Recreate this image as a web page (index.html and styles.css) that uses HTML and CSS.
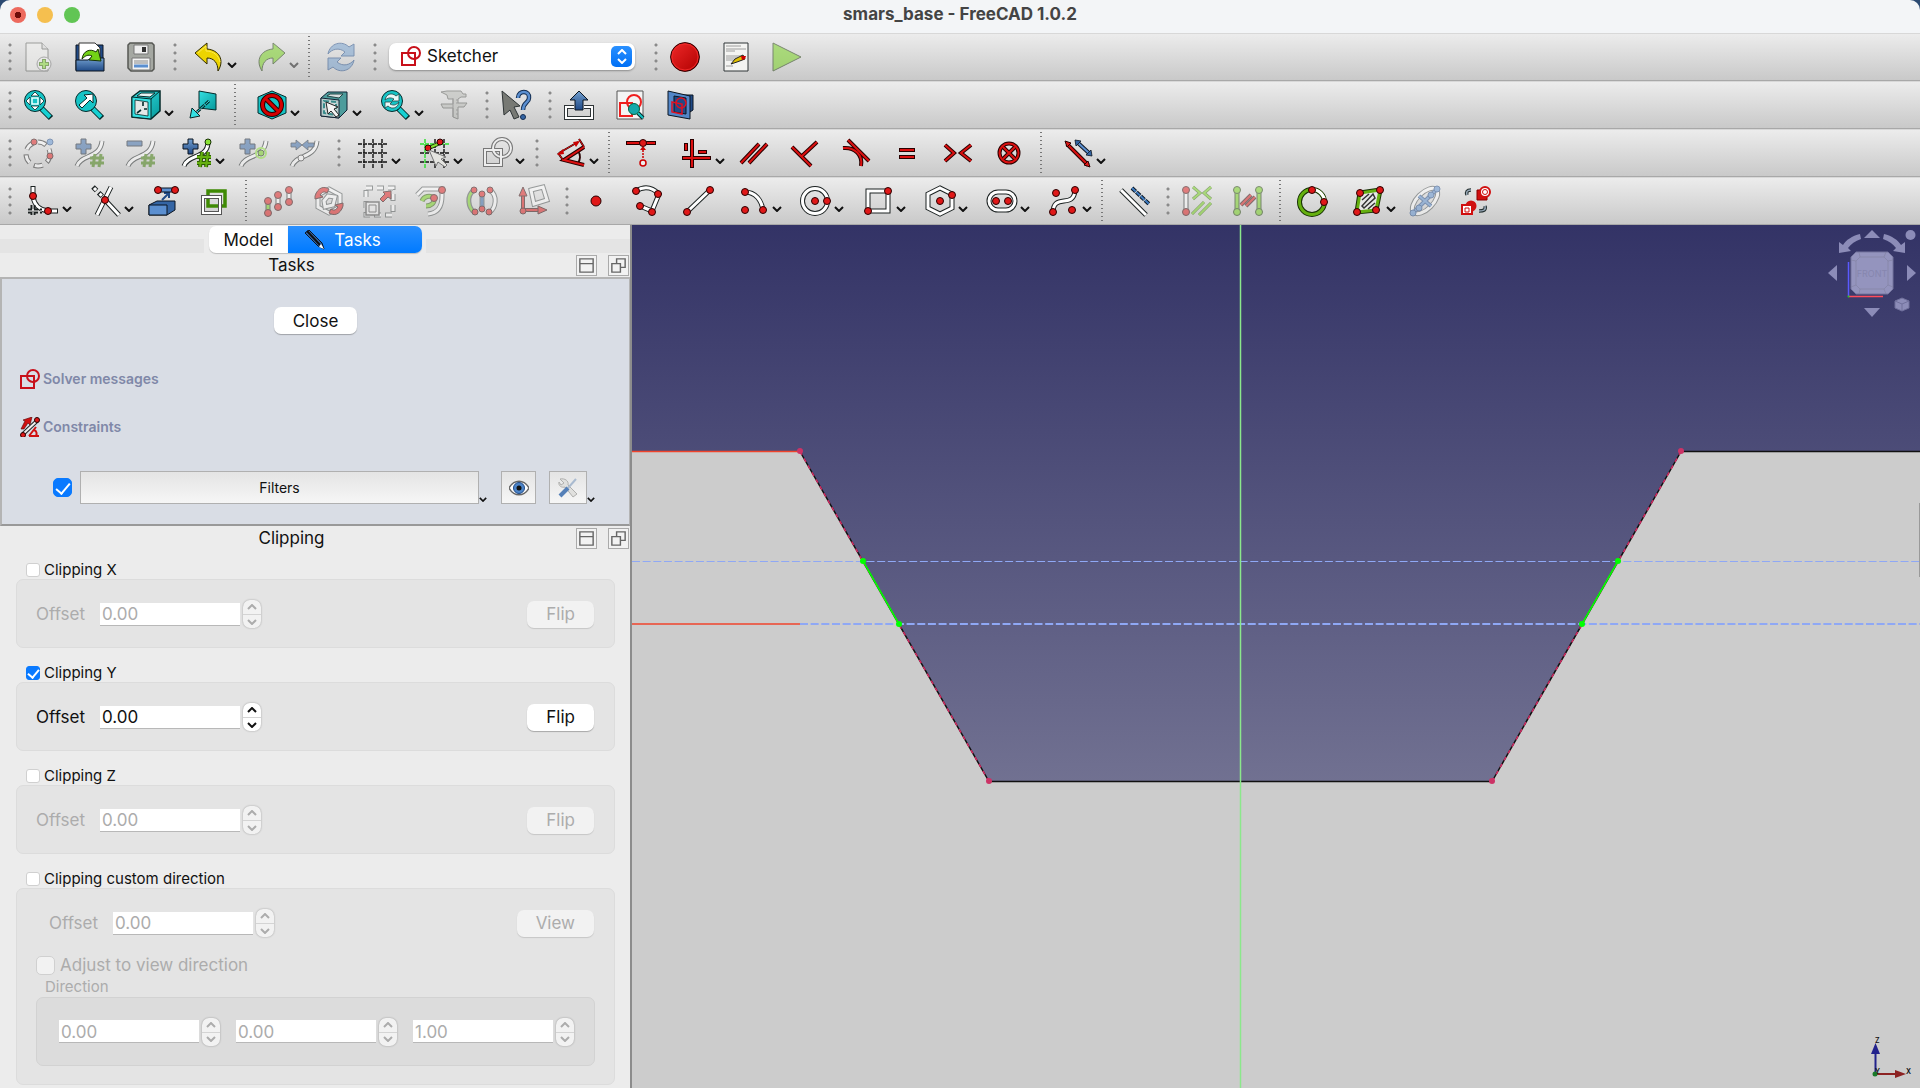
FILE: index.html
```html
<!DOCTYPE html>
<html lang="en">
<head>
<meta charset="utf-8">
<title>smars_base - FreeCAD 1.0.2</title>
<link rel="stylesheet" href="styles.css">
</head>
<body>
<svg class="defs" width="0" height="0" aria-hidden="true">
  <defs>
    <linearGradient id="gBlue" x1="0" y1="0" x2="0" y2="1"><stop offset="0" stop-color="#729fcf"/><stop offset="1" stop-color="#204a87"/></linearGradient>
    <linearGradient id="gRed" x1="0" y1="0" x2="1" y2="1"><stop offset="0" stop-color="#ef2929"/><stop offset="1" stop-color="#b00000"/></linearGradient>
    <linearGradient id="gTeal" x1="0" y1="0" x2="1" y2="1"><stop offset="0" stop-color="#34e0e2"/><stop offset="1" stop-color="#06989a"/></linearGradient>
    <linearGradient id="gSky" x1="0" y1="0" x2="0" y2="1"><stop offset="0" stop-color="#333366"/><stop offset="1" stop-color="#9393a9"/></linearGradient>
  </defs>
  <symbol id="chev" viewBox="0 0 10 6"><path d="M1 1L5 5L9 1" fill="none" stroke="#111" stroke-width="2"/></symbol>
  <symbol id="sketch" viewBox="0 0 20 20"><g fill="none" stroke="#c8101a" stroke-width="2"><path d="M1 7H14V19H1Z"/><circle cx="13" cy="7" r="6"/></g></symbol>
  <symbol id="up" viewBox="0 0 10 6"><path d="M1 5L5 1L9 5" fill="none" stroke="currentColor" stroke-width="2"/></symbol>
  <symbol id="down" viewBox="0 0 10 6"><path d="M1 1L5 5L9 1" fill="none" stroke="currentColor" stroke-width="2"/></symbol>
</svg>

<header class="titlebar">
  <div class="lights"><button class="light light-close" aria-label="Close window"></button><button class="light light-min" aria-label="Minimize"></button><button class="light light-max" aria-label="Zoom"></button></div>
  <h1>smars_base - FreeCAD 1.0.2</h1>
</header>

<nav class="toolbars">
<div class="toolbar">
  <span class="handle"></span>
  <button class="tool off" aria-label="New"><svg class="icon" viewBox="0 0 30 30"><path d="M2 1H18L24 7V29H2Z" fill="#f2f2f0" stroke="#555753"/><path d="M18 1V7H24" fill="#ddd" stroke="#555753"/><circle cx="20" cy="22" r="7" fill="#f4f4f4" stroke="#777"/><path d="M20 17V27M15 22H25" stroke="#3c7a04" stroke-width="4"/><path d="M20 18V26M16 22H24" stroke="#8ae234" stroke-width="2"/></svg></button>
  <button class="tool" aria-label="Open"><svg class="icon" viewBox="0 0 30 30"><path d="M1 3H28V28H1Z" fill="#204a87" stroke="#0b1521"/><path d="M4 1H20L25 6V20H4Z" fill="#fff" stroke="#333"/><path d="M1 29V18H13L16 16H29V29Z" fill="url(#gBlue)" stroke="#0b1521"/><path d="M7 17C8 9 15 6 21 10L23 7L26 19L14 18L17 14C13 12 10 14 7 17Z" fill="#73d216" stroke="#173104"/></svg></button>
  <button class="tool" aria-label="Save"><svg class="icon" viewBox="0 0 30 30"><path d="M2 3L4 1H26L28 3V27L26 29H5L2 26Z" fill="#a5a8a2" stroke="#555753" stroke-width="1.5"/><path d="M8 3H22V12H8Z" fill="#eee" stroke="#777"/><path d="M16 5H20V10H16Z" fill="#333"/><path d="M6 16H24V28H6Z" fill="#f4f4f4" stroke="#777"/><path d="M8 19H22M8 21H22" stroke="#888"/><path d="M8 24H22" stroke="#5b8fd0" stroke-width="3"/></svg></button>
  <span class="handle"></span>
  <button class="tool drop" aria-label="Undo"><svg class="icon" viewBox="0 0 30 30"><path d="M1 11L13 1V7C25 8 31 18 24 29C24 21 20 16 13 16V22Z" fill="#edd400" stroke="#302b00" stroke-linejoin="round"/><path d="M4 11L12 4V9C20 9 25 14 26 20" fill="none" stroke="#fce94f"/></svg><svg class="chev"><use href="#chev"/></svg></button>
  <button class="tool drop off" aria-label="Redo"><svg class="icon" viewBox="0 0 30 30"><path d="M29 11L17 1V7C5 8 -1 18 6 29C6 21 10 16 17 16V22Z" fill="#73d216" stroke="#173104" stroke-linejoin="round"/></svg><svg class="chev"><use href="#chev"/></svg></button>
  <span class="sep"></span>
  <button class="tool off" aria-label="Refresh"><svg class="icon" viewBox="0 0 30 30"><g fill="#729fcf" stroke="#204a87" stroke-linejoin="round"><path d="M2 12C4 1 16 -2 23 5L28 2V14H15L19 10C13 5 6 7 2 12Z"/><path d="M28 18C26 29 14 32 7 25L2 28V16H15L11 20C17 25 24 23 28 18Z"/></g></svg></button>
  <span class="handle"></span>
  <div class="workbench">
    <svg class="mini"><use href="#sketch"/></svg>
    <select aria-label="Workbench"><option>Sketcher</option></select>
    <span class="stepper"><svg><use href="#up"/></svg><svg><use href="#down"/></svg></span>
  </div>
  <span class="handle"></span>
  <button class="tool" aria-label="Record macro"><svg class="icon" viewBox="0 0 30 30"><circle cx="15" cy="15" r="14.4" fill="url(#gRed)" stroke="#280000"/><circle cx="15" cy="15" r="13" fill="none" stroke="#ef2929"/></svg></button>
  <button class="tool" aria-label="Macros"><svg class="icon" viewBox="0 0 30 30"><path d="M3 1H27V29H3Z" fill="#f4f4f2" stroke="#2e3436"/><path d="M5 4H20M5 7H25M5 9H14M5 14H23M5 16H20M5 18H14M5 24H12" stroke="#888" stroke-width=".8"/><path d="M10 22L14 17L22 13L24 17L16 20Z" fill="#e0c000" stroke="#222"/><path d="M20 14L25 14L24 17L21 18Z" fill="#cc0000"/></svg></button>
  <button class="tool off" aria-label="Run macro"><svg class="icon" viewBox="0 0 30 30"><path d="M1 1L29 15L1 29Z" fill="#73d216" stroke="#173104"/></svg></button>
</div>

<div class="toolbar">
  <span class="handle"></span>
  <button class="tool" aria-label="Fit all"><svg class="icon" viewBox="0 0 30 30"><path d="M17 18L27 28" stroke="#042a2a" stroke-width="6"/><path d="M18 19L26 27" stroke="#16d0d2" stroke-width="4"/><circle cx="11" cy="11" r="10.5" fill="#16c4c6" stroke="#042a2a"/><path d="M11 2L15 6H7ZM11 20L15 16H7ZM2 11L6 7V15ZM20 11L16 7V15Z" fill="#fff" stroke="#042a2a" stroke-width=".8"/><path d="M8 8H14V14H8Z" fill="none" stroke="#e8ffff" stroke-width="1.5"/></svg></button>
  <button class="tool" aria-label="Fit selection"><svg class="icon" viewBox="0 0 30 30"><path d="M17 18L27 28" stroke="#042a2a" stroke-width="6"/><path d="M18 19L26 27" stroke="#16d0d2" stroke-width="4"/><circle cx="11" cy="11" r="10.5" fill="#16c4c6" stroke="#042a2a"/><path d="M18 4V13L15 10L7 18L4 15L12 8L9 5Z" fill="#fff" stroke="#042a2a"/></svg></button>
  <button class="tool drop" aria-label="Standard views"><svg class="icon" viewBox="0 0 30 30"><path d="M1 7L9 1H29V21L20 29L1 27Z" fill="url(#gTeal)" stroke="#042a2a" stroke-width="1.5"/><path d="M1 7L20 9V29L1 27Z" fill="#34e0e2" stroke="#042a2a"/><path d="M4 10L17 12V26L4 24Z" fill="#e4e8e8" stroke="#042a2a" stroke-width=".8"/><path d="M20 9L29 1M6 6L10 3H24L19 7Z" fill="#e4f4f4" stroke="#042a2a"/><path d="M12 12V16M13 19H16M6 23L10 20" stroke="#042a2a" stroke-width="1.6"/></svg><svg class="chev"><use href="#chev"/></svg></button>
  <button class="tool" aria-label="Align to selection"><svg class="icon" viewBox="0 0 30 30"><path d="M11 1L28 4V20L11 18Z" fill="url(#gTeal)" stroke="#042a2a"/><path d="M21 11L9 22" stroke="#042a2a" stroke-width="3" stroke-dasharray="5 1"/><path d="M21 11L9 22" stroke="#34e0e2" stroke-dasharray="5 1"/><path d="M2 28L4 18L12 26Z" fill="#34e0e2" stroke="#042a2a"/></svg></button>
  <span class="sep"></span>
  <button class="tool drop" aria-label="Draw style"><svg class="icon" viewBox="0 0 30 30"><path d="M15 1L29 7V23L15 29L1 23V7Z" fill="#16c4c6" stroke="#042a2a"/><circle cx="15" cy="15" r="9.5" fill="none" stroke="#280000" stroke-width="5"/><path d="M8 8L22 22" stroke="#280000" stroke-width="5"/><circle cx="15" cy="15" r="9.5" fill="none" stroke="#d40000" stroke-width="3"/><path d="M8 8L22 22" stroke="#d40000" stroke-width="3"/></svg><svg class="chev"><use href="#chev"/></svg></button>
  <button class="tool drop" aria-label="Selection"><svg class="icon" viewBox="0 0 30 30"><path d="M2 8L9 2H28V20L20 28L2 26Z" fill="#4d9c9c" stroke="#123"/><path d="M2 8L20 10V28L2 26Z" fill="#b8cccc" stroke="#123"/><path d="M5 11L17 12V25L5 23Z" fill="#d0d8d8" stroke="#3a8c8c" stroke-width="2" stroke-dasharray="5 2"/><path d="M8 6L11 4H24L20 8Z" fill="#d8e0e0" stroke="#244"/><path d="M7 12L19 17L15 19L20 25L17 27L12 21L9 24Z" fill="#f4f4f4" stroke="#222"/></svg><svg class="chev"><use href="#chev"/></svg></button>
  <button class="tool drop" aria-label="Sync view"><svg class="icon" viewBox="0 0 30 30"><path d="M17 18L27 28" stroke="#042a2a" stroke-width="6"/><path d="M18 19L26 27" stroke="#16d0d2" stroke-width="4"/><circle cx="11" cy="11" r="10.5" fill="#16c4c6" stroke="#042a2a"/><path d="M4 10C5 4 11 2 15 6L18 4V11H11L13 9C9 7 7 8 4 10ZM18 12C17 18 11 20 7 16L4 18V12H11L9 14C13 16 15 15 18 12Z" fill="#e8f8f8" stroke="#244" stroke-width=".8"/></svg><svg class="chev"><use href="#chev"/></svg></button>
  <button class="tool off" aria-label="Measure"><svg class="icon" viewBox="0 0 30 30"><path d="M3 2L9 1H23L25 4H28V7H23L20 9V13H29L26 17H20V29L15 27V18H5L3 14H15V9H10L9 5Z" fill="#b8bab5" stroke="#555753"/><path d="M15 8V27M18 10H20M18 13H20M18 20H20M18 24H20" stroke="#666"/></svg></button>
  <span class="handle"></span>
  <button class="tool" aria-label="What's this"><svg class="icon" viewBox="0 0 30 30"><path d="M1 1L19 16L13 17L18 27L13 29L9 20L3 25Z" fill="#777974" stroke="#2e3436"/><path d="M17 8C17 0 29 0 28 8C28 13 22 12 22 20" fill="none" stroke="#122c50" stroke-width="4.5"/><path d="M17 8C17 0 29 0 28 8C28 13 22 12 22 20" fill="none" stroke="#5b8fd0" stroke-width="2.5"/><circle cx="22" cy="27" r="2.5" fill="#3465a4" stroke="#122c50"/></svg></button>
  <span class="handle"></span>
  <button class="tool" aria-label="Leave sketch"><svg class="icon" viewBox="0 0 30 30"><path d="M10 17H2V28H28V17H20" fill="none" stroke="#2e3436" stroke-width="4"/><path d="M10 17H2V28H28V17H20" fill="none" stroke="#fff" stroke-width="2"/><path d="M15 1L24 10H19V20H11V10H6Z" fill="url(#gBlue)" stroke="#0b1521"/></svg></button>
  <button class="tool" aria-label="View sketch"><svg class="icon" viewBox="0 0 30 30"><path d="M2 1H28V29H2Z" fill="#f4f4f4" stroke="#555"/><g fill="none" stroke="#ef1f1f" stroke-width="2"><path d="M5 13H17V26H5Z"/><circle cx="19" cy="12" r="7"/></g><path d="M23 23L28 28" stroke="#042a2a" stroke-width="4"/><path d="M23 23L28 28" stroke="#16c4c6" stroke-width="2"/><circle cx="19" cy="19" r="5.5" fill="#16a8aa" stroke="#064"/></svg></button>
  <button class="tool" aria-label="View section"><svg class="icon" viewBox="0 0 30 30"><path d="M8 5H27V20L24 22H8Z" fill="#204a87" stroke="#0b1521"/><path d="M2 1L24 6V29L2 25Z" fill="#5286c8" stroke="#0b1521"/><path d="M8 6L20 8V24L8 22Z" fill="#204a87" stroke="#0b1521"/><g fill="none" stroke="#e01020" stroke-width="1.5"><path d="M6 12L16 14V24L6 22Z"/><circle cx="15" cy="13" r="5"/></g></svg></button>
</div>

<div class="toolbar">
  <span class="handle"></span>
  <button class="tool off" aria-label="Show geometry"><svg class="icon" viewBox="0 0 30 30"><circle cx="14" cy="16" r="12" fill="none" stroke="#222" stroke-width="5" stroke-dasharray="9 5"/><circle cx="14" cy="16" r="12" fill="none" stroke="#fff" stroke-width="3" stroke-dasharray="8 6"/><circle cx="10" cy="4" r="3" class="dot"/><circle cx="26" cy="18" r="3" class="dot"/><circle cx="26" cy="4" r="3" fill="#5b8fd0" stroke="#204a87"/></svg></button>
  <button class="tool off" aria-label="Increase degree"><svg class="icon" viewBox="0 0 30 30"><path d="M2 28C6 16 25 21 27 3" class="k"/><path d="M2 28C6 16 25 21 27 3" class="w"/><path d="M6 1H11V6H16V11H11V16H6V11H1V6H6Z" fill="#3465a4" stroke="#0b1521"/><path d="M20 16L18 29M26 16L24 29M15 20H29M15 25H29" stroke="#3c7a04" stroke-width="3"/></svg></button>
  <button class="tool off" aria-label="Decrease degree"><svg class="icon" viewBox="0 0 30 30"><path d="M2 28C6 16 25 21 27 3" class="k"/><path d="M2 28C6 16 25 21 27 3" class="w"/><path d="M1 3H16V8H1Z" fill="#3465a4" stroke="#0b1521"/><path d="M20 16L18 29M26 16L24 29M15 20H29M15 25H29" stroke="#3c7a04" stroke-width="3"/></svg></button>
  <button class="tool drop" aria-label="Knot multiplicity"><svg class="icon" viewBox="0 0 30 30"><path d="M2 28C6 16 25 21 26 5" class="k"/><path d="M2 28C6 16 25 21 26 5" class="w"/><path d="M6 1H11V6H16V11H11V16H6V11H1V6H6Z" fill="url(#gBlue)" stroke="#0b1521"/><path d="M20 14L18 29M26 14L24 29M15 19H29M15 25H29" stroke="#2d5d04" stroke-width="4"/><path d="M20 14L18 29M26 14L24 29M15 19H29M15 25H29" stroke="#65b010" stroke-width="2"/><circle cx="26" cy="4" r="3" fill="#8ae234" stroke="#173104"/></svg><svg class="chev"><use href="#chev"/></svg></button>
  <button class="tool off" aria-label="Insert knot"><svg class="icon" viewBox="0 0 30 30"><path d="M2 28C6 16 25 21 27 3" class="k"/><path d="M2 28C6 16 25 21 27 3" class="w"/><path d="M6 1H11V6H16V11H11V16H6V11H1V6H6Z" fill="#3465a4" stroke="#0b1521"/><circle cx="22" cy="15" r="5" fill="none" stroke="#8ae234" stroke-width="2"/><circle cx="22" cy="15" r="3" fill="#73d216" stroke="#173104"/></svg></button>
  <button class="tool off" aria-label="Join curves"><svg class="icon" viewBox="0 0 30 30"><path d="M2 28C6 16 25 21 27 3" class="k"/><path d="M2 28C6 16 25 21 27 3" class="w"/><path d="M1 5H6V2L12 7L6 12V9H1ZM24 5H18V2L12 7L18 12V9H24Z" fill="#3465a4" stroke="#0b1521" stroke-width=".8"/><circle cx="11" cy="20" r="3" fill="#fff" stroke="#333"/></svg></button>
  <span class="handle"></span>
  <button class="tool drop" aria-label="Toggle grid"><svg class="icon" viewBox="0 0 30 30"><path d="M6 1V30M15 1V30M24 1V30M0 6H30M0 15H30M0 24H30" stroke="#111" stroke-width="1.4" stroke-dasharray="4 1"/></svg><svg class="chev"><use href="#chev"/></svg></button>
  <button class="tool drop" aria-label="Toggle snap"><svg class="icon" viewBox="0 0 30 30"><path d="M15 1V30M24 1V30M0 15H30M0 24H30" stroke="#111" stroke-width="1.4" stroke-dasharray="4 1"/><path d="M5 1V30M0 6H30" stroke="#2be02b" stroke-width="1.4" stroke-dasharray="4 1"/><path d="M9 10L20 5" stroke="#173104" stroke-width="4"/><path d="M9 10L20 5" stroke="#8ae234" stroke-width="2"/><circle cx="8" cy="10" r="3" class="dot"/><circle cx="20" cy="4" r="3" class="dot"/><path d="M9 12L26 19L21 21L27 27L25 29L18 24L16 28Z" fill="#e4e4e0" stroke="#777"/></svg><svg class="chev"><use href="#chev"/></svg></button>
  <button class="tool drop" aria-label="Rendering order"><svg class="icon" viewBox="0 0 30 30"><g fill="none" stroke="#777" stroke-width="4"><path d="M3 12H19V27H3Z"/><circle cx="20" cy="10" r="9"/></g><g fill="none" stroke="#eee" stroke-width="2"><path d="M3 12H19V27H3Z"/><circle cx="20" cy="10" r="9"/></g></svg><svg class="chev"><use href="#chev"/></svg></button>
  <span class="handle"></span>
  <button class="tool drop" aria-label="Dimension"><svg class="icon" viewBox="0 0 30 30"><path d="M28 27L8 22L28 9M2 15L7 22M23 1L28 9M3 15L22 4M22 13C25 17 24 22 22 25" class="rk thin"/><path d="M28 27L8 22L28 9" class="rk"/><path d="M28 27L8 22L28 9" class="r"/><path d="M2 15L7 22M23 1L28 9M3 15L22 4" class="r thin2"/><path d="M1 17L7 11L8 16ZM24 3L17 4L20 9Z" fill="#cc0000"/></svg><svg class="chev"><use href="#chev"/></svg></button>
  <span class="sep"></span>
  <button class="tool" aria-label="Coincident"><svg class="icon" viewBox="0 0 30 30"><path d="M0 5H30" class="rk"/><path d="M1 5H29" class="r"/><circle cx="17" cy="5" r="3.5" class="dot"/><path d="M17 8L20 12H14Z" fill="#c00"/><path d="M17 12V21" stroke="#c00" stroke-width="1.5" stroke-dasharray="2 1"/><circle cx="17" cy="25" r="3" fill="#eee" stroke="#c00" stroke-width="1.5"/></svg></button>
  <button class="tool drop" aria-label="Horizontal or vertical"><svg class="icon" viewBox="0 0 30 30"><path d="M10 1V30M0 20H29M4 5V13M16 14H25" class="rk"/><path d="M10 2V29M1 20H28M4 6V12M17 14H24" class="r"/></svg><svg class="chev"><use href="#chev"/></svg></button>
  <button class="tool" aria-label="Parallel"><svg class="icon" viewBox="0 0 30 30"><path d="M2 25L20 6M10 25L28 6" class="rk"/><path d="M2 25L20 6M10 25L28 6" class="r"/></svg></button>
  <button class="tool" aria-label="Perpendicular"><svg class="icon" viewBox="0 0 30 30"><path d="M2 9L21 28M12 18L27 4" class="rk"/><path d="M2 9L21 28M12 18L27 4" class="r"/></svg></button>
  <button class="tool" aria-label="Tangent"><svg class="icon" viewBox="0 0 30 30"><path d="M7 2L28 23M2 10C14 9 22 17 20 28" class="rk"/><path d="M7 2L28 23M2 10C14 9 22 17 20 28" class="r"/></svg></button>
  <button class="tool" aria-label="Equal"><svg class="icon" viewBox="0 0 30 30"><path d="M7 12H23M7 19H23" class="rk"/><path d="M8 12H22M8 19H22" class="r"/></svg></button>
  <button class="tool" aria-label="Symmetric"><svg class="icon" viewBox="0 0 30 30"><path d="M2 7L11 15L2 23M28 7L18 15L28 23" class="rk"/><path d="M2 7L11 15L2 23M28 7L18 15L28 23" class="r"/></svg></button>
  <button class="tool" aria-label="Block"><svg class="icon" viewBox="0 0 30 30"><circle cx="15" cy="15" r="9.5" class="rk"/><path d="M9 9L21 21M21 9L9 21" class="rk"/><circle cx="15" cy="15" r="9.5" class="r"/><path d="M9 9L21 21M21 9L9 21" class="r"/></svg></button>
  <span class="sep"></span>
  <button class="tool drop" aria-label="Toggle driving"><svg class="icon" viewBox="0 0 30 30"><path d="M4 6L25 27" class="rk"/><path d="M4 6L25 27" class="r"/><path d="M2 3L8 5L4 9ZM27 29L21 27L25 23Z" class="dot"/><path d="M14 4L27 16" stroke="#0b1521" stroke-width="4"/><path d="M14 4L27 16" stroke="#5b8fd0" stroke-width="2"/><path d="M12 2L18 3L13 8ZM29 18L23 17L28 12Z" fill="#3465a4" stroke="#0b1521" stroke-width=".8"/></svg><svg class="chev"><use href="#chev"/></svg></button>
</div>

<div class="toolbar">
  <span class="handle"></span>
  <button class="tool drop" aria-label="Fillet"><svg class="icon" viewBox="0 0 30 30"><path d="M4 0V10C5 19 11 24 19 25H29" class="k"/><path d="M4 1V10C5 19 11 24 19 25H28" class="w"/><path d="M4 19V30M-1 25H13" class="k" stroke-dasharray="4 2"/><path d="M4 19V30M-1 25H13" class="w thin2" stroke-dasharray="4 2"/><circle cx="4" cy="10" r="3.5" class="dot"/><circle cx="19" cy="25" r="3.5" class="dot"/></svg><svg class="chev"><use href="#chev"/></svg></button>
  <button class="tool drop" aria-label="Trim"><svg class="icon" viewBox="0 0 30 30"><path d="M20 1L6 29M15 15L28 29" class="k"/><path d="M2 1L13 12" class="k" stroke-dasharray="5 3"/><path d="M20 1L6 29M15 15L28 29" class="w"/><path d="M3 2L13 12" class="w" stroke-dasharray="3 5"/><circle cx="14" cy="14" r="3.5" class="dot"/></svg><svg class="chev"><use href="#chev"/></svg></button>
  <button class="tool" aria-label="External geometry"><svg class="icon" viewBox="0 0 30 30"><path d="M1 19L9 15H27V24L19 29H1Z" fill="#3465a4" stroke="#0b1521"/><path d="M1 19H19V29H1Z" fill="#5b8fd0" stroke="#0b1521"/><path d="M14 14L20 8M16 7H21V12" fill="none" stroke="#204a87" stroke-width="2"/><path d="M10 4H27" stroke="#0b1521" stroke-width="5"/><path d="M10 4H27" stroke="#5b8fd0" stroke-width="3"/><circle cx="10" cy="4" r="3.5" class="dot"/><circle cx="27" cy="4" r="3.5" class="dot"/></svg></button>
  <button class="tool" aria-label="Carbon copy"><svg class="icon" viewBox="0 0 30 30"><path d="M9 5H26V20H9Z" fill="none" stroke="#3f8a04" stroke-width="3.5"/><path d="M4 11H21V27H4Z" fill="none" stroke="#555" stroke-width="4"/><path d="M4 11H21V27H4Z" fill="none" stroke="#fff" stroke-width="2"/></svg></button>
  <span class="sep"></span>
  <button class="tool off" aria-label="Array"><svg class="icon" viewBox="0 0 30 30"><path d="M5 15V27M15 9V21M26 4V16" class="k"/><path d="M15 9V21M26 4V16" class="w"/><path d="M5 15V27" stroke="#73d216" stroke-width="3"/><circle cx="5" cy="15" r="3.5" class="dot"/><circle cx="5" cy="27" r="3.5" class="dot"/><circle cx="15" cy="9" r="3.5" class="dot"/><circle cx="15" cy="21" r="3.5" class="dot"/><circle cx="26" cy="4" r="3.5" class="dot"/><circle cx="26" cy="16" r="3.5" class="dot"/></svg></button>
  <button class="tool off" aria-label="Rotate"><svg class="icon" viewBox="0 0 30 30"><path d="M15 3L26 9V21L15 27L4 21V9Z" class="k soft"/><path d="M15 3L26 9V21L15 27L4 21V9Z" class="w"/><path d="M14 10L21 11L19 19L11 21L10 15Z" class="k soft"/><path d="M14 10L21 11L19 19L11 21L10 15Z" class="w"/><path d="M1 10C4 1 10 0 15 3L13 7C10 5 8 6 6 9L9 11L1 13ZM29 20C26 29 20 30 15 27L17 23C20 25 22 24 24 21L21 19L29 17Z" class="dot"/></svg></button>
  <button class="tool off" aria-label="Scale"><svg class="icon" viewBox="0 0 30 30"><path d="M1 2H28V29H1Z" class="k soft" stroke-dasharray="7 4"/><path d="M1 2H28V29H1Z" class="w" stroke-dasharray="6 5"/><path d="M1 16H14V29H1Z" fill="#eee" stroke="#444" stroke-width="1.5"/><path d="M4 19H11V26H4Z" fill="none" stroke="#444"/><path d="M26 5V13L23 11L18 16L15 13L20 8L18 6Z" class="dot"/></svg></button>
  <button class="tool off" aria-label="Offset"><svg class="icon" viewBox="0 0 30 30"><path d="M1 9L7 3H26V10C26 21 22 27 12 28" class="k soft"/><path d="M1 9L7 3H26V10C26 21 22 27 12 28" class="w"/><path d="M6 15C8 10 14 9 18 12C19 17 15 20 10 20" fill="none" stroke="#2d5d04" stroke-width="5"/><path d="M6 15C8 10 14 9 18 12C19 17 15 20 10 20" fill="none" stroke="#73d216" stroke-width="3"/><circle cx="26" cy="4" r="3.5" class="dot"/><circle cx="18" cy="12" r="3.5" class="dot"/></svg></button>
  <button class="tool off" aria-label="Symmetry"><svg class="icon" viewBox="0 0 30 30"><path d="M7 4C-1 10 1 22 8 27M23 4C31 10 29 22 22 27M15 8V22" class="k soft"/><path d="M23 4C31 10 29 22 22 27" class="w"/><path d="M7 4C-1 10 1 22 8 27" fill="none" stroke="#73d216" stroke-width="2.5"/><path d="M15 8V22" stroke="#3465a4" stroke-width="3"/><circle cx="7" cy="4" r="3" class="dot"/><circle cx="23" cy="4" r="3" class="dot"/><circle cx="8" cy="26" r="3" class="dot"/><circle cx="22" cy="26" r="3" class="dot"/><circle cx="15" cy="8" r="3" class="dot"/><circle cx="15" cy="23" r="3" class="dot"/></svg></button>
  <button class="tool off" aria-label="Remove axes alignment"><svg class="icon" viewBox="0 0 30 30"><path d="M13 4L25 1L29 14L16 18Z" class="k soft"/><path d="M13 4L25 1L29 14L16 18Z" class="w"/><path d="M5 24V8M5 24H23" class="rk"/><path d="M5 24V8M5 24H23" class="r"/><path d="M5 1L9 10H1ZM29 24L20 28V20Z" class="dot"/><circle cx="5" cy="25" r="3" class="dot"/></svg></button>
  <span class="handle"></span>
  <button class="tool" aria-label="Point"><svg class="icon" viewBox="0 0 30 30"><circle cx="15" cy="15" r="5" class="dot"/></svg></button>
  <button class="tool" aria-label="Polyline"><svg class="icon" viewBox="0 0 30 30"><path d="M4 5C12 0 20 1 27 8L20 25L8 20" class="k"/><path d="M4 5C12 0 20 1 27 8L20 25L8 20" class="w"/><circle cx="4" cy="5" r="3.5" class="dot"/><circle cx="26" cy="8" r="3.5" class="dot"/><circle cx="20" cy="26" r="3.5" class="dot"/><circle cx="8" cy="20" r="3.5" class="dot"/></svg></button>
  <button class="tool" aria-label="Line"><svg class="icon" viewBox="0 0 30 30"><path d="M4 26L27 4" class="k"/><path d="M4 26L27 4" class="w"/><circle cx="4" cy="26" r="3.5" class="dot"/><circle cx="27" cy="4" r="3.5" class="dot"/></svg></button>
  <button class="tool drop" aria-label="Arc"><svg class="icon" viewBox="0 0 30 30"><path d="M6 6C16 6 23 14 24 25" class="k"/><path d="M6 6C16 6 23 14 24 25" class="w"/><circle cx="6" cy="6" r="3.5" class="dot"/><circle cx="24" cy="24" r="3.5" class="dot"/><circle cx="6" cy="24" r="3.5" class="dot"/></svg><svg class="chev"><use href="#chev"/></svg></button>
  <button class="tool drop" aria-label="Circle"><svg class="icon" viewBox="0 0 30 30"><circle cx="14" cy="15" r="12.5" class="k"/><circle cx="14" cy="15" r="12.5" class="w"/><circle cx="14" cy="15" r="3.5" class="dot"/><circle cx="26" cy="15" r="3.5" class="dot"/></svg><svg class="chev"><use href="#chev"/></svg></button>
  <button class="tool drop" aria-label="Rectangle"><svg class="icon" viewBox="0 0 30 30"><path d="M5 5H25V25H5Z" class="k"/><path d="M5 5H25V25H5Z" class="w"/><circle cx="25" cy="5" r="3.5" class="dot"/><circle cx="5" cy="25" r="3.5" class="dot"/></svg><svg class="chev"><use href="#chev"/></svg></button>
  <button class="tool drop" aria-label="Polygon"><svg class="icon" viewBox="0 0 30 30"><path d="M15 2L27 8V22L15 28L3 22V8Z" class="k"/><path d="M15 2L27 8V22L15 28L3 22V8Z" class="w"/><circle cx="15" cy="15" r="3.5" class="dot"/><circle cx="27" cy="9" r="3.5" class="dot"/></svg><svg class="chev"><use href="#chev"/></svg></button>
  <button class="tool drop" aria-label="Slot"><svg class="icon" viewBox="0 0 30 30"><rect x="2" y="6" width="26" height="18" rx="9" class="k"/><rect x="2" y="6" width="26" height="18" rx="9" class="w"/><circle cx="9" cy="15" r="3.5" class="dot"/><circle cx="21" cy="15" r="3.5" class="dot"/></svg><svg class="chev"><use href="#chev"/></svg></button>
  <button class="tool drop" aria-label="B-spline"><svg class="icon" viewBox="0 0 30 30"><path d="M4 27C4 6 25 24 26 4" class="k"/><path d="M4 27C4 6 25 24 26 4" class="w"/><circle cx="4" cy="26" r="3.5" class="dot"/><circle cx="26" cy="4" r="3.5" class="dot"/><circle cx="7" cy="7" r="3.5" class="dot"/><circle cx="23" cy="24" r="3.5" class="dot"/></svg><svg class="chev"><use href="#chev"/></svg></button>
  <span class="sep"></span>
  <button class="tool" aria-label="Construction geometry"><svg class="icon" viewBox="0 0 30 30"><path d="M2 4L27 29" class="k"/><path d="M2 4L27 29" class="w"/><path d="M13 2L30 18" stroke="#0b1521" stroke-width="4" stroke-dasharray="5 1"/><path d="M13 2L30 18" stroke="#3f7cc0" stroke-width="2" stroke-dasharray="5 1"/></svg></button>
  <span class="handle"></span>
  <button class="tool off" aria-label="Select constraints"><svg class="icon" viewBox="0 0 30 30"><path d="M4 4V26" class="k"/><path d="M4 4V26" class="w"/><circle cx="4" cy="4" r="3.5" class="dot"/><circle cx="4" cy="26" r="3.5" class="dot"/><path d="M11 1L18 7L11 13M29 1L22 7L29 13M10 28L22 16M17 29L29 17" fill="none" stroke="#2d5d04" stroke-width="3"/><path d="M11 1L18 7L11 13M29 1L22 7L29 13M10 28L22 16M17 29L29 17" fill="none" stroke="#73d216" stroke-width="2"/></svg></button>
  <button class="tool off" aria-label="Select geometry"><svg class="icon" viewBox="0 0 30 30"><path d="M4 4V26M26 4V26" stroke="#173104" stroke-width="5"/><path d="M4 4V26M26 4V26" stroke="#73d216" stroke-width="3"/><g fill="#73d216" stroke="#173104"><circle cx="4" cy="4" r="3.5"/><circle cx="4" cy="26" r="3.5"/><circle cx="26" cy="4" r="3.5"/><circle cx="26" cy="26" r="3.5"/></g><path d="M8 19L18 9M13 20L22 11" class="rk"/><path d="M8 19L18 9M13 20L22 11" class="r"/></svg></button>
  <span class="sep"></span>
  <button class="tool" aria-label="Select origin"><svg class="icon" viewBox="0 0 30 30"><circle cx="15" cy="16" r="12.5" fill="none" stroke="#173104" stroke-width="5"/><circle cx="15" cy="16" r="12.5" fill="none" stroke="#65b010" stroke-width="3"/><path d="M15 3.500A12.500 12.500 0 0 1 27.500 16" class="w"/><circle cx="15" cy="4" r="3.5" class="dot"/><circle cx="27" cy="16" r="3.5" class="dot"/></svg></button>
  <button class="tool drop" aria-label="Internal geometry"><svg class="icon" viewBox="0 0 30 30"><path d="M7 7L27 4L23 24L4 26Z" fill="none" stroke="#173104" stroke-width="5"/><path d="M7 7L27 4L23 24L4 26Z" fill="#e8e8e8" stroke="#65b010" stroke-width="3"/><path d="M9 20L20 8L22 12L11 22ZM9 14L16 8M15 23L22 17" fill="none" stroke="#333" stroke-width="1.5"/><circle cx="7" cy="7" r="3.5" class="dot"/><circle cx="27" cy="4" r="3.5" class="dot"/><circle cx="23" cy="24" r="3.5" class="dot"/><circle cx="4" cy="26" r="3.5" class="dot"/></svg><svg class="chev"><use href="#chev"/></svg></button>
  <button class="tool off" aria-label="Ellipse geometry"><svg class="icon" viewBox="0 0 30 30"><ellipse cx="15" cy="15" rx="16" ry="8" transform="rotate(-45 15 15)" class="k soft"/><ellipse cx="15" cy="15" rx="16" ry="8" transform="rotate(-45 15 15)" class="w"/><path d="M3 27L27 3M9 10L21 20" stroke="#204a87" stroke-width="4"/><path d="M3 27L27 3M9 10L21 20" stroke="#5b8fd0" stroke-width="2"/><g fill="#5b8fd0" stroke="#204a87"><circle cx="3" cy="27" r="3"/><circle cx="27" cy="3" r="3"/><circle cx="9" cy="22" r="3"/><circle cx="21" cy="9" r="3"/></g></svg></button>
  <button class="tool" aria-label="Switch space"><svg class="icon" viewBox="0 0 30 30"><path d="M16 4H26V14H16Z" fill="#d01010" stroke="#800"/><circle cx="24" cy="6" r="5" fill="#fff" stroke="#d01010" stroke-width="2"/><circle cx="24" cy="6" r="2.5" fill="none" stroke="#d01010"/><circle cx="10" cy="20" r="5.5" fill="#d01010"/><path d="M1 19H11V28H1Z" fill="#fff" stroke="#d01010" stroke-width="2"/><path d="M4 22H8V26H4Z" fill="none" stroke="#d01010"/><path d="M10 4C6 4 5 6 6 9M18 25C23 25 25 24 24 20" fill="none" stroke="#243030" stroke-width="3.5"/><path d="M10 4C6 4 5 6 6 9M18 25C23 25 25 24 24 20" fill="none" stroke="#9ab" stroke-width="1.5"/></svg></button>
</div>
</nav>

<main class="workspace">
<aside class="side">
  <div class="tabs" role="tablist">
    <i></i>
    <button class="tab" role="tab">Model</button><button class="tab on" role="tab" aria-selected="true"><svg class="mini" viewBox="0 0 20 20"><path d="M0 3L4 0L17 13L19 19L13 16Z" fill="#3465a4" stroke="#0b1521"/><path d="M2 1L15 15" stroke="#111" stroke-width="2"/><path d="M16 14L19 19L14 17Z" fill="#fff"/></svg>Tasks</button>
    <i></i>
  </div>
  <header class="dock"><h2>Tasks</h2>
    <button class="dockbtn" aria-label="Collapse"><svg viewBox="0 0 20 20"><path d="M3 3H17V17H3ZM3 8H17" fill="none" stroke="#666" stroke-width="1.5"/></svg></button>
    <button class="dockbtn" aria-label="Float"><svg viewBox="0 0 20 20"><path d="M8 3H17V12H8Z" fill="#f2f2f2" stroke="#666" stroke-width="1.5"/><path d="M3 8H12V17H3Z" fill="#f2f2f2" stroke="#666" stroke-width="1.5"/></svg></button>
  </header>
  <section class="tasks">
    <button class="push close">Close</button>
    <h3><svg class="mini"><use href="#sketch"/></svg>Solver messages</h3>
    <h3><svg class="mini" viewBox="0 0 20 20"><path d="M1 12L5 4L3 3L12 0L10 8L8 6L4 12Z" fill="#d01010" stroke="#500" stroke-width=".6"/><path d="M3 17L18 3" stroke="#222" stroke-width="4"/><path d="M3 17L18 3" stroke="#eee" stroke-width="2"/><circle cx="17" cy="3" r="2.5" class="dot"/><circle cx="3" cy="18" r="2.5" class="dot"/><path d="M9 19H19M9 19L16 10M14 13C17 14 17 17 16 19" fill="none" stroke="#d01010" stroke-width="2"/></svg>Constraints</h3>
    <div class="filters">
      <input type="checkbox" class="check big" checked aria-label="Enable filters">
      <button class="flat wide">Filters</button><svg class="chev"><use href="#chev"/></svg>
      <button class="flat eye" aria-label="Show constraints"><svg class="mini" viewBox="0 0 20 20"><path d="M0 10C5 1 15 1 20 10C15 19 5 19 0 10Z" fill="#fff" stroke="#666" stroke-width="1.5"/><circle cx="10" cy="10" r="5.5" fill="#4c84c8" stroke="#204a87"/><circle cx="10" cy="10" r="2.5" fill="#111"/></svg></button>
      <button class="flat gear" aria-label="Settings"><svg class="mini" viewBox="0 0 20 20"><path d="M2 1L6 5L3 7L1 4C0 8 4 10 7 9L15 19L19 16L10 7C11 3 7 0 2 1Z" fill="#e0e0de" stroke="#b0b0ae"/><path d="M18 1L10 10" stroke="#aabbd0" stroke-width="2"/><path d="M10 10L2 18" stroke="#5580b8" stroke-width="4"/></svg></button><svg class="chev"><use href="#chev"/></svg>
    </div>
  </section>
  <header class="dock"><h2>Clipping</h2>
    <button class="dockbtn" aria-label="Collapse"><svg viewBox="0 0 20 20"><path d="M3 3H17V17H3ZM3 8H17" fill="none" stroke="#666" stroke-width="1.5"/></svg></button>
    <button class="dockbtn" aria-label="Float"><svg viewBox="0 0 20 20"><path d="M8 3H17V12H8Z" fill="#f2f2f2" stroke="#666" stroke-width="1.5"/><path d="M3 8H12V17H3Z" fill="#f2f2f2" stroke="#666" stroke-width="1.5"/></svg></button>
  </header>
  <section class="clipping">
    <div class="group dim">
      <label class="head"><input type="checkbox" class="check">Clipping X</label>
      <div class="box row"><label for="ox">Offset</label><span class="spin"><input id="ox" value="0.00" disabled><span class="arrows"><button aria-label="Up" disabled><svg><use href="#up"/></svg></button><button aria-label="Down" disabled><svg><use href="#down"/></svg></button></span></span><button class="push" disabled>Flip</button></div>
    </div>
    <div class="group">
      <label class="head"><input type="checkbox" class="check" checked>Clipping Y</label>
      <div class="box row"><label for="oy">Offset</label><span class="spin"><input id="oy" value="0.00"><span class="arrows"><button aria-label="Up"><svg><use href="#up"/></svg></button><button aria-label="Down"><svg><use href="#down"/></svg></button></span></span><button class="push">Flip</button></div>
    </div>
    <div class="group dim">
      <label class="head"><input type="checkbox" class="check">Clipping Z</label>
      <div class="box row"><label for="oz">Offset</label><span class="spin"><input id="oz" value="0.00" disabled><span class="arrows"><button aria-label="Up" disabled><svg><use href="#up"/></svg></button><button aria-label="Down" disabled><svg><use href="#down"/></svg></button></span></span><button class="push" disabled>Flip</button></div>
    </div>
    <div class="group dim">
      <label class="head"><input type="checkbox" class="check">Clipping custom direction</label>
      <div class="box custom">
        <div class="row inset"><label for="oc">Offset</label><span class="spin"><input id="oc" value="0.00" disabled><span class="arrows"><button aria-label="Up" disabled><svg><use href="#up"/></svg></button><button aria-label="Down" disabled><svg><use href="#down"/></svg></button></span></span><button class="push" disabled>View</button></div>
        <label class="adjust"><input type="checkbox" class="check big" disabled>Adjust to view direction</label>
        <div class="legend">Direction</div>
        <div class="direction">
          <span class="spin"><input aria-label="Direction X" value="0.00" disabled><span class="arrows"><button aria-label="Up" disabled><svg><use href="#up"/></svg></button><button aria-label="Down" disabled><svg><use href="#down"/></svg></button></span></span>
          <span class="spin"><input aria-label="Direction Y" value="0.00" disabled><span class="arrows"><button aria-label="Up" disabled><svg><use href="#up"/></svg></button><button aria-label="Down" disabled><svg><use href="#down"/></svg></button></span></span>
          <span class="spin"><input aria-label="Direction Z" value="1.00" disabled><span class="arrows"><button aria-label="Up" disabled><svg><use href="#up"/></svg></button><button aria-label="Down" disabled><svg><use href="#down"/></svg></button></span></span>
        </div>
      </div>
    </div>
  </section>
</aside>

<section class="view" aria-label="3D view">
  <svg class="scene" viewBox="632 225 1288 863" preserveAspectRatio="xMidYMid slice">
    <rect x="632" y="225" width="1288" height="863" fill="url(#gSky)"/>
    <path d="M632 451.500H800L989 781.500H1492L1681 451.500H1920V1088H632Z" fill="#cccccc"/>
    <path d="M1681 451.500H1920M989 781.500H1492" stroke="#111" stroke-width="1.500"/>
    <path d="M800 451.500L989 781.500M1681 451.500L1492 781.500" stroke="#111" stroke-width="1.500"/>
    <path d="M800 451.500L989 781.500M1681 451.500L1492 781.500" stroke="#d02a60" stroke-width="1.500" stroke-dasharray="4 4"/>
    <path d="M632 561.500H1920" stroke="#8fa8f5" stroke-dasharray="8 2.660"/>
    <path d="M800 624H1920" stroke="#8fa8f5" stroke-width="2" stroke-dasharray="8 2.660"/>
    <path d="M632 451.500H800M632 624H800" stroke="#f0442c" stroke-width="1.600"/>
    <path d="M1240.500 225V1088" stroke="#8be88b" stroke-width="1.500"/>
    <path d="M863 561L899 624M1618 561L1582 624" stroke="#00ff00" stroke-width="1.600"/>
    <path d="M1919.500 503V577" stroke="#9a9a9a"/>
    <g fill="#cc3366"><circle cx="800" cy="451" r="3"/><circle cx="989" cy="781" r="3"/><circle cx="1492" cy="781" r="3"/><circle cx="1681" cy="451" r="3"/></g>
    <g fill="#00ff00"><circle cx="863" cy="561" r="3"/><circle cx="899" cy="624" r="3"/><circle cx="1618" cy="561" r="3"/><circle cx="1582" cy="624" r="3"/></g>
  </svg>
  <svg class="navcube" viewBox="1820 225 100 100">
    <g fill="#8c8cb8"><path d="M1872 230L1880 238H1864Z"/><path d="M1872 317L1864 308H1880Z"/><path d="M1828 273L1837 265V281Z"/><path d="M1916 273L1907 265V281Z"/><circle cx="1910.500" cy="235" r="5"/>
    <path d="M1860 234C1852 236 1846 240 1843 245L1839 242V253L1851 251L1848 248C1851 244 1855 241 1861 239Z"/><path d="M1884 234C1892 236 1898 240 1901 245L1905 242V253L1893 251L1896 248C1893 244 1889 241 1883 239Z"/>
    <path d="M1902 298L1909 301V308L1902 311L1895 308V301Z" stroke="#70709c"/></g>
    <path d="M1895 301L1902 304L1909 301M1902 304V311" fill="none" stroke="#70709c"/>
    <path d="M1856 252H1888L1893 257V289L1888 294H1856L1851 289V257Z" fill="#9494be" stroke="#74749e"/>
    <path d="M1859 252L1860 257H1884L1886 252M1859 294L1860 289H1884L1886 294M1851 260L1856 261V285L1851 287M1893 260L1888 261V285L1893 287M1856 261L1860 257M1884 257L1888 261M1856 285L1860 289M1888 285L1884 289" fill="none" stroke="#80809f" stroke-width=".6"/>
    <text x="1872" y="277" text-anchor="middle" font-size="9" fill="#8686ae">FRONT</text>
    <path d="M1848.500 262V296" stroke="#5a5aff" stroke-width="1.500"/><path d="M1848.500 296.500H1883" stroke="#ff4c5c" stroke-width="1.500"/><circle cx="1848.500" cy="296.500" r="1" fill="#2c2"/>
  </svg>
  <svg class="axes" viewBox="1860 1028 60 60">
    <path d="M1875.500 1074V1050" stroke="#22228c" stroke-width="2"/><path d="M1875.500 1043L1880 1054H1871Z" fill="#22228c"/>
    <path d="M1875 1074H1897" stroke="#8c2222" stroke-width="2"/><path d="M1906 1074L1895 1078V1070Z" fill="#8c2222"/><circle cx="1875" cy="1074" r="2.500" fill="#1a7a2a"/>
    <g font-size="7" font-weight="600" fill="#111"><text x="1875" y="1043">Z</text><text x="1906" y="1074">X</text><text x="1875" y="1074">Y</text></g>
  </svg>
</section>
</main>
</body>
</html>
```
FILE: styles.css
```css
* { box-sizing: border-box; }
html, body { height: 100%; }
body { margin: 0; display: flex; flex-direction: column; background: #2b4a72; color: #111; font: 16px/20px Inter, "Liberation Sans", sans-serif; overflow: hidden; }
button, input, select { font: inherit; color: inherit; margin: 0; padding: 0; border: 0; background: none; }
button { display: flex; align-items: center; justify-content: center; }
h1, h2, h3 { margin: 0; }
.defs { position: absolute; }

.titlebar { display: grid; grid-template-columns: 1fr auto 1fr; align-items: center; height: 33px; padding: 0 10px 4px; background: #f3f5f7; border-radius: 10px 10px 0 0; flex: none; }
.titlebar h1 { font-size: 17px; line-height: 18px; padding-bottom: 2px; font-weight: 700; color: #444; }
.lights { display: flex; gap: 11px; }
.light { width: 16px; height: 16px; border-radius: 50%; }
.light-close { background: radial-gradient(#6d0b08 0 3px, #ed6a5e 3px); }
.light-min { background: #f5bf4f; }
.light-max { background: #61c554; }

.toolbars { flex: none; }
.toolbar { display: flex; align-items: center; height: 48px; padding-left: 1px; background: linear-gradient(#ececec, #c9c9c9); border-top: 1px solid #d8d8d8; border-bottom: 1px solid #a8a8a8; }
.handle { flex: none; width: 12px; height: 32px; background: radial-gradient(circle at 9px 4px, #8a8a8a 1px, transparent 2px) 0 0 / 12px 8px; }
.sep { flex: none; width: 13px; height: 42px; background: linear-gradient(#777 0 1px, transparent 1px) 6px 0 / 2px 4px repeat-y; }
.tool { flex: none; width: 51px; height: 46px; }
.tool.drop { width: 62px; padding-left: 13px; gap: 3px; }
.tool.off > svg { opacity: .5; }
.icon { width: 30px; height: 30px; overflow: visible; }
.chev { flex: none; width: 10px; height: 6px; }
.tool .chev { margin-top: 15px; }
.mini { flex: none; width: 20px; height: 20px; }
.k { fill: none; stroke: #1c2222; stroke-width: 5; }
.soft { stroke: #4c5252; }
.w { fill: none; stroke: #fff; stroke-width: 3; }
.rk { fill: none; stroke: #280000; stroke-width: 4; }
.r { fill: none; stroke: #dc1010; stroke-width: 2; }
.thin { stroke-width: 2; }
.thin2 { stroke-width: 1; }
.dot { fill: #e01818; stroke: #280000; stroke-width: 1; }

.workbench { display: flex; align-items: center; position: relative; width: 246px; height: 27px; margin: 0 12px 2px 11px; padding: 0 3px 0 12px; background: #fff; border-radius: 7px; box-shadow: 0 1px 2px #0005; }
.workbench select { flex: 1; height: 27px; padding-left: 6px; appearance: none; font-size: 17px; }
.stepper { display: flex; flex-direction: column; align-items: center; justify-content: center; gap: 3px; width: 21px; height: 21px; border-radius: 5px; background: linear-gradient(#2a90ff, #0070f5); color: #fff; pointer-events: none; }
.stepper svg { width: 10px; height: 6px; }

.workspace { flex: 1; min-height: 0; display: flex; }
.side { flex: none; width: 632px; background: #ececec; border-right: 2px solid #8c8c8c; overflow: hidden; }
.tabs { display: flex; justify-content: center; align-items: flex-end; height: 28px; }
.tabs i { flex: 1; height: 14px; background: #e4e4e4; }
.tabs i:first-child { margin-right: 5px; }
.tabs i:last-child { margin-left: 4px; }
.tab { width: 79px; height: 27px; background: #fff; border-radius: 7px 0 0 7px; font-size: 17px; box-shadow: 0 1px 1px #0003; }
.tab.on { width: 134px; padding-right: 24px; gap: 9px; border-radius: 0 7px 7px 0; color: #fff; background: linear-gradient(#2a90ff, #007aff); }
.dock { display: flex; align-items: center; gap: 11px; height: 24px; padding-right: 1px; }
.dock h2 { flex: 1; padding-left: 18px; text-align: center; font-size: 17px; font-weight: 400; }
.dockbtn { width: 21px; height: 21px; border: 1px solid #aaa; background: #f2f2f2; }
.dockbtn svg { width: 19px; height: 19px; }
.tasks { height: 249px; padding-top: 28px; background: #d9dde5; border: 2px solid #b4b4b4; border-right-width: 1px; border-bottom-color: #999; }
.push { height: 27px; padding: 0 19px; border-radius: 7px; background: #fff; font-size: 17px; box-shadow: 0 1px 1px #0004; }
.close { margin: 0 auto 21px; }
.tasks h3 { display: flex; align-items: center; gap: 3px; height: 48px; padding-left: 18px; font-size: 14px; font-weight: 600; color: #8088a8; }
.filters { display: flex; align-items: center; height: 33px; margin-top: 20px; padding-left: 51px; }
.flat { height: 33px; border: 1px solid #b0b0b0; background: linear-gradient(#e4e4e4, #f6f6f6); font-size: 14px; }
.wide { width: 399px; margin-left: 8px; }
.eye { width: 35px; margin: 0 13px 0 14px; }
.gear { width: 38px; }
.filters .chev { align-self: flex-end; width: 8px; height: 5px; margin-bottom: 2px; }

.check { flex: none; display: grid; place-items: center; appearance: none; width: 14px; height: 14px; border: 1px solid #d0d0d0; border-radius: 3px; background: #fff; }
.check:checked { border-color: #0a7aff; background: #0a7aff; }
.check:checked::before { content: ""; width: 5px; height: 9px; margin-bottom: 2px; border: solid #fff; border-width: 0 2px 2px 0; transform: rotate(40deg); }
.check.big { width: 19px; height: 19px; border-radius: 5px; }
.check.big:checked::before { width: 6px; height: 12px; }
.check:disabled { background: #f2f2f2; }
.clipping { padding: 10px 15px 2px 16px; }
.group + .group { margin-top: 15px; }
.head { display: flex; align-items: center; gap: 4px; height: 19px; padding-left: 10px; font-size: 15px; }
.box { border: 1px solid #dcdcdc; border-radius: 7px; background: #e4e4e4; }
.row { display: flex; align-items: center; height: 69px; padding: 1px 20px 0 19px; font-size: 17px; }
.row .push { margin-left: auto; }
.row > label { width: 64px; }
.dim .box { color: #acacac; }
.dim .push { background: #f2f2f2; box-shadow: 0 1px 1px #0002; }
.spin { display: flex; align-items: center; gap: 3px; }
.spin input { width: 140px; height: 23px; padding: 1px 0 0 2px; background: #fff; border-bottom: 1px solid #b8b8b8; font-size: 17px; }
.arrows { width: 18px; height: 28px; border-radius: 7px; background: #fff; box-shadow: 0 0 2px #0005; }
.arrows button { width: 18px; height: 14px; }
.arrows button + button { border-top: 1px solid #d4d4d4; }
.arrows svg { width: 10px; height: 6px; }
.dim .arrows { background: #f2f2f2; }
.custom { padding: 0 19px 18px; }
.custom .row { height: 68px; padding: 0 1px 0 13px; }
.adjust { display: flex; align-items: center; gap: 5px; height: 20px; margin-top: -2px; font-size: 17px; }
.legend { height: 22px; padding-left: 9px; line-height: 24px; font-size: 15px; }
.direction { display: flex; align-items: center; gap: 16px; height: 69px; padding: 0 22px; background: #dcdcdc; border: 1px solid #d2d2d2; border-radius: 7px; }

.view { position: relative; flex: 1; min-width: 0; background: #ccc; }
.scene { display: block; width: 100%; height: 100%; }
.navcube { position: absolute; top: 0; right: 0; width: 100px; height: 100px; }
.axes { position: absolute; bottom: 0; right: 0; width: 60px; height: 60px; }
```
